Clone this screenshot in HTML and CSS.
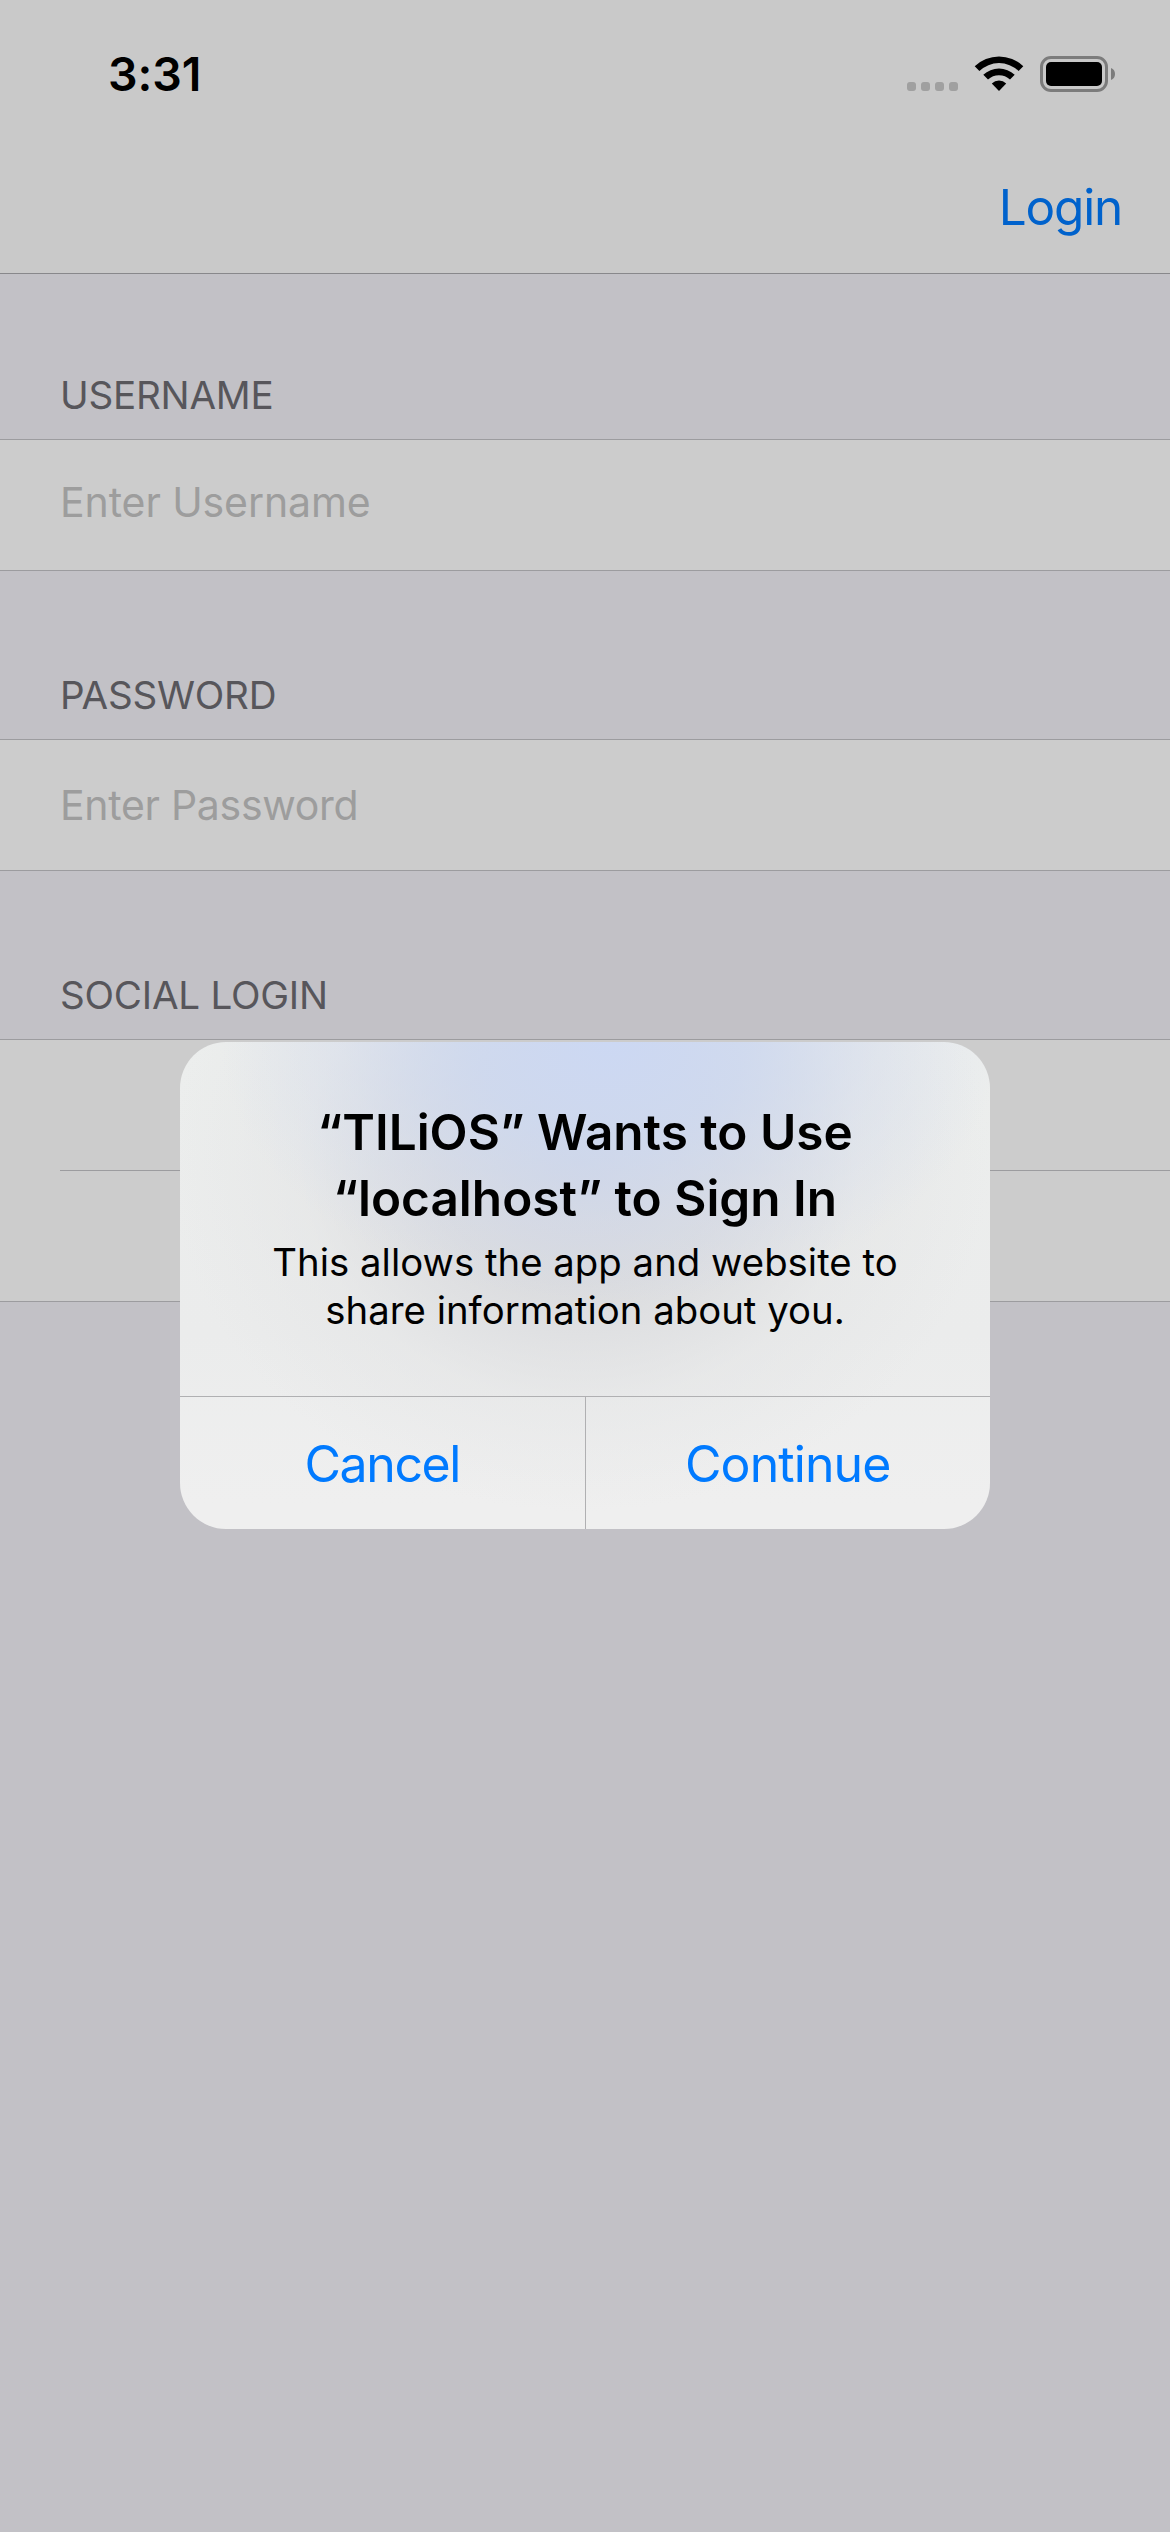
FILE: index.html
```html
<!DOCTYPE html>
<html lang="en">
<head>
<meta charset="utf-8">
<title>Login</title>
<link rel="stylesheet" href="styles.css">
</head>
<body>
<div class="screen">
  <header class="header">
    <div class="status">
      <span class="time">3:31</span>
      <svg class="cellular" width="51" height="9" viewBox="0 0 51 9"><rect width="9" height="9" rx="3"/><rect x="14" width="9" height="9" rx="3"/><rect x="28" width="9" height="9" rx="3"/><rect x="42" width="9" height="9" rx="3"/></svg>
      <svg class="wifi" width="50" height="37" viewBox="0 0 50 37"><path d="M0.7 11.2A35 35 0 0 1 49.3 11.2L44.6 16A28.3 28.3 0 0 0 5.4 16Z"/><path d="M9.3 19.8A22.7 22.7 0 0 1 40.7 19.8L36 24.6A16 16 0 0 0 14 24.6Z"/><path d="M17.8 28.4A10.6 10.6 0 0 1 32.2 28.4L25 36Z"/></svg>
      <svg class="battery" width="76" height="36" viewBox="0 0 76 36"><rect class="battery-case" x="1.5" y="1.5" width="65" height="33" rx="9.5"/><rect x="6" y="6" width="56" height="24" rx="5"/><path class="battery-cap" d="M71 12Q75 13.5 75 18T71 24Z"/></svg>
    </div>
    <nav class="nav"><a class="nav-action">Login</a></nav>
  </header>
  <main class="form">
    <h2 class="label label-first">USERNAME</h2>
    <div class="group"><div class="field field-username">Enter Username</div></div>
    <h2 class="label">PASSWORD</h2>
    <div class="group"><div class="field field-password">Enter Password</div></div>
    <h2 class="label">SOCIAL LOGIN</h2>
    <div class="group"><div class="field"></div><div class="divider"></div><div class="field"></div></div>
  </main>
  <div class="alert" role="alertdialog">
    <div class="alert-body">
      <div class="alert-title">“TILiOS” Wants to Use<br>“localhost” to Sign In</div>
      <div class="alert-message">This allows the app and website to<br>share information about you.</div>
    </div>
    <div class="alert-actions">
      <div class="action action-cancel">Cancel</div>
      <div class="action action-continue">Continue</div>
    </div>
  </div>
</div>
</body>
</html>
```
FILE: styles.css
```css
* { box-sizing: border-box; }
body { margin: 0; background: #c2c1c6; font-family: Inter, "Liberation Sans", sans-serif; }
.screen { position: relative; width: 1170px; height: 2532px; overflow: hidden; background: #c2c1c6; }
.header { height: 274px; background: #c9c9c9; border-bottom: 1px solid #88888b; }
.status { display: flex; height: 141px; padding: 0 54px 0 108px; }
.time { width: 799px; margin-top: 46px; font-size: 46.5px; font-weight: 600; line-height: 57px; letter-spacing: -0.1px; }
.cellular { margin-top: 82px; fill: #a0a0a0; }
.wifi { margin: 55px 0 0 16px; }
.battery { margin: 56px 0 0 16px; }
.battery-case { fill: none; stroke: #7c7c7c; stroke-width: 3; }
.battery-cap { fill: #7c7c7c; }
.nav { display: flex; align-items: center; justify-content: flex-end; height: 132px; padding-right: 48px; }
.nav-action { font-size: 49.5px; line-height: 60px; letter-spacing: -1.2px; color: #0062cc; }
.label { display: flex; align-items: flex-end; height: 168px; margin: 0; padding: 0 60px 20px; font-size: 38.6px; font-weight: 400; line-height: 48px; letter-spacing: -0.22px; color: #57565b; }
.label-first { height: 165px; }
.group { border: solid #9c9c9f; border-width: 1px 0; background: #ccc; }
.field { display: flex; align-items: center; height: 130px; padding-left: 60px; font-size: 41px; line-height: 50px; color: #9d9d9d; }
.field-username { padding-bottom: 6px; letter-spacing: -0.1px; }
.field-password { letter-spacing: -0.3px; }
.divider { height: 1px; margin-left: 60px; background: #9c9c9f; }
.alert { position: absolute; left: 180px; top: 1042px; width: 810px; height: 487px; border-radius: 46px; overflow: hidden; text-align: center; color: #000;
  background:
    radial-gradient(ellipse 390px 260px at 430px 0, rgba(204,216,243,1) 0, rgba(204,216,241,.8) 35%, rgba(208,218,240,.38) 68%, rgba(214,222,236,0) 100%),
    radial-gradient(ellipse 410px 350px at 400px 120px, #d2d5de 0, rgba(213,214,218,.75) 35%, rgba(226,227,228,.45) 68%, rgba(232,233,233,0) 100%),
    linear-gradient(#eceeed, #ebecec 60%, #eeeeee 95%); }
.alert-body { height: 354px; padding-top: 57px; }
.alert-title { font-size: 49.5px; font-weight: 600; line-height: 66px; letter-spacing: 0; }
.alert-message { margin-top: 7px; font-size: 38.3px; line-height: 48px; letter-spacing: 0.03px; }
.alert-actions { display: flex; height: 133px; border-top: 1px solid #b0b0b2; background: rgba(255,255,255,.08); }
.action { display: flex; flex: 1; align-items: center; justify-content: center; padding-top: 1px; font-size: 50px; line-height: 60px; color: #007aff; }
.action + .action { border-left: 1px solid #b0b0b2; }
.action-cancel { letter-spacing: -1.4px; }
.action-continue { letter-spacing: -0.9px; }
```
